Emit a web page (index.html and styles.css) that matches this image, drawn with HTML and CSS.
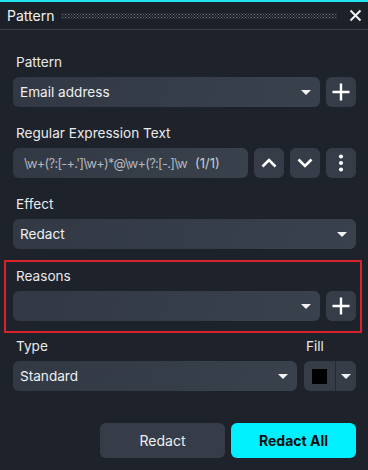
FILE: index.html
```html
<!DOCTYPE html>
<html lang="en">
<head>
    <meta charset="UTF-8">
    <meta name="viewport" content="width=device-width, initial-scale=1.0">
    <title>Pattern</title>
    <link rel="stylesheet" href="styles.css">
</head>
<body>
    <div class="dialog">
        <div class="titlebar">
            <span class="title">Pattern</span>
            <span class="grip"></span>
            <span class="close">
                <svg width="13" height="13" viewBox="0 0 13 13"><path d="M1.5 1.5 L11.5 11.5 M11.5 1.5 L1.5 11.5" stroke="#f2f2f2" stroke-width="2" fill="none"/></svg>
            </span>
        </div>

        <div class="content">
            <div class="field">
                <div class="label">Pattern</div>
                <div class="row">
                    <div class="select grow">
                        <span class="value">Email address</span>
                        <span class="caret"></span>
                    </div>
                    <div class="icon-btn">
                        <svg width="18" height="18" viewBox="0 0 18 18"><path d="M9 0.5 V17.5 M0.5 9 H17.5" stroke="#fff" stroke-width="2.4" fill="none"/></svg>
                    </div>
                </div>
            </div>

            <div class="field">
                <div class="label">Regular Expression Text</div>
                <div class="row">
                    <div class="input grow">
                        <span class="regex">\w+(?:[-+.']\w+)*@\w+(?:[-.]\w</span>
                        <span class="count">(1/1)</span>
                    </div>
                    <div class="icon-btn">
                        <svg width="16" height="10" viewBox="0 0 16 10"><path d="M1.5 8.5 L8 2 L14.5 8.5" stroke="#fff" stroke-width="2.6" fill="none"/></svg>
                    </div>
                    <div class="icon-btn">
                        <svg width="16" height="10" viewBox="0 0 16 10"><path d="M1.5 1.5 L8 8 L14.5 1.5" stroke="#fff" stroke-width="2.6" fill="none"/></svg>
                    </div>
                    <div class="icon-btn">
                        <svg width="6" height="18" viewBox="0 0 6 18"><circle cx="3" cy="2.5" r="2.1" fill="#fff"/><circle cx="3" cy="9" r="2.1" fill="#fff"/><circle cx="3" cy="15.5" r="2.1" fill="#fff"/></svg>
                    </div>
                </div>
            </div>

            <div class="field">
                <div class="label">Effect</div>
                <div class="select">
                    <span class="value">Redact</span>
                    <span class="caret"></span>
                </div>
            </div>

            <div class="field highlighted">
                <div class="label">Reasons</div>
                <div class="row">
                    <div class="select grow">
                        <span class="value"></span>
                        <span class="caret"></span>
                    </div>
                    <div class="icon-btn">
                        <svg width="18" height="18" viewBox="0 0 18 18"><path d="M9 0.5 V17.5 M0.5 9 H17.5" stroke="#fff" stroke-width="2.4" fill="none"/></svg>
                    </div>
                </div>
            </div>

            <div class="field type-row">
                <div class="type-col">
                    <div class="label">Type</div>
                    <div class="select">
                        <span class="value">Standard</span>
                        <span class="caret"></span>
                    </div>
                </div>
                <div class="fill-col">
                    <div class="label">Fill</div>
                    <div class="fill-picker">
                        <span class="swatch-part"><span class="swatch"></span></span>
                        <span class="arrow-part"><span class="caret"></span></span>
                    </div>
                </div>
            </div>

            <div class="actions">
                <button class="btn">Redact</button>
                <button class="btn primary">Redact All</button>
            </div>
        </div>
    </div>
</body>
</html>
```

FILE: styles.css
```css
body {
    margin: 0;
    padding: 0;
    background-color: #1e222b;
    font-family: Inter, "Noto Sans", sans-serif;
    color: #e9eaec;
}

.dialog {
    width: 368px;
    height: 470px;
    background-color: #1e222b;
    overflow: hidden;
}

.titlebar {
    display: flex;
    align-items: center;
    height: 27px;
    border-top: 2px solid #1fe4f0;
    border-bottom: 1px solid #3a3f48;
    background-color: #1c2029;
    padding: 0 6px 0 7px;
}

.title {
    font-size: 14px;
    color: #f2f2f2;
}

.grip {
    flex: 1;
    height: 6px;
    margin: 0 12px 0 7px;
    background-image:
        radial-gradient(circle, #6f737a 0.7px, transparent 0.9px),
        radial-gradient(circle, #6f737a 0.7px, transparent 0.9px);
    background-size: 3px 3px, 3px 3px;
    background-position: 0 0, 1.5px 1.5px;
}

.close {
    display: flex;
    width: 13px;
    height: 13px;
}

.content {
    padding: 24px 12px 0 13px;
}

.field {
    margin-bottom: 18px;
}

.label {
    font-size: 13.6px;
    line-height: 17px;
    margin: 0 0 6px 3px;
    color: #e9eaec;
}

.row {
    display: flex;
    gap: 6px;
}

.grow {
    flex: 1;
    min-width: 0;
}

.select, .input {
    display: flex;
    align-items: center;
    height: 30px;
    padding: 0 9px 0 7px;
    border-radius: 6px;
    background: linear-gradient(100deg, #323944, #39414c);
    font-size: 13.6px;
    color: #eef0f2;
    box-sizing: border-box;
}

.select .value {
    flex: 1;
}

.caret {
    width: 0;
    height: 0;
    border-left: 5px solid transparent;
    border-right: 5px solid transparent;
    border-top: 5px solid #f2f2f2;
}

.input {
    padding: 0 3px 0 11px;
    overflow: hidden;
}

.regex {
    white-space: nowrap;
    font-size: 12.8px;
    letter-spacing: -0.7px;
    color: #b3b8bf;
}

.count {
    margin-left: 8px;
    font-size: 13px;
    color: #c9cdd2;
    white-space: nowrap;
}

.icon-btn {
    display: flex;
    align-items: center;
    justify-content: center;
    width: 30px;
    height: 30px;
    border-radius: 6px;
    background-color: #363d48;
    flex-shrink: 0;
}

.highlighted {
    margin: -7px -6px 5px -9px;
    padding: 6px 4px 10px 7px;
    border: 2px solid #d9222a;
}

.type-row {
    display: flex;
    gap: 7px;
}

.type-col {
    flex: 1;
}

.fill-col {
    width: 52px;
}

.fill-col .label {
    margin-left: 2px;
}

.fill-picker {
    display: flex;
    height: 30px;
    border-radius: 6px;
    overflow: hidden;
    background-color: #363d48;
}

.swatch-part {
    display: flex;
    align-items: center;
    justify-content: center;
    width: 31px;
    border-right: 1px solid #262b33;
}

.swatch {
    width: 15px;
    height: 15px;
    background-color: #000;
}

.arrow-part {
    flex: 1;
    display: flex;
    align-items: center;
    justify-content: center;
}

.actions {
    display: flex;
    justify-content: flex-end;
    gap: 6px;
    margin-top: 32px;
}

.btn {
    width: 125px;
    height: 35px;
    border: none;
    border-radius: 6px;
    background-color: #363d48;
    color: #eef0f2;
    font-family: Inter, "Noto Sans", sans-serif;
    font-size: 14px;
}

.btn.primary {
    background-color: #00f0ff;
    color: #0b0d10;
    font-weight: bold;
}
```
